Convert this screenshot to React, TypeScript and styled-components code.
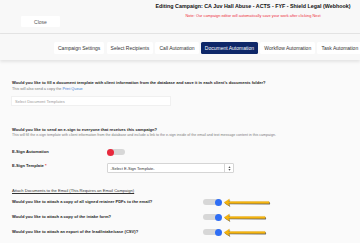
import React from 'react';
import styled, { createGlobalStyle } from 'styled-components';

const GlobalStyle = createGlobalStyle`
  html, body {
    margin: 0;
    padding: 0;
    background: #fafafa;
  }
  body {
    font-family: "Liberation Sans", Arial, sans-serif;
    color: #222;
  }
`;

const Page = styled.div`
  width: 360px;
  height: 243px;
  overflow: hidden;
  background: #fafafa;
`;

const Header = styled.div`
  display: flex;
  height: 33px;
  background: #f8f8f8;
  border-bottom: 1px solid #e4e4e4;
`;

const CloseCell = styled.div`
  width: 146px;
  padding: 16px 0 0 21px;
  box-sizing: border-box;
`;

const CloseButton = styled.div`
  width: 39px;
  height: 11px;
  background: #fff;
  border-radius: 1px;
  display: flex;
  align-items: center;
  justify-content: center;
  font-size: 5px;
  color: #555;
`;

const TitleBlock = styled.div`
  flex: 1;
  text-align: center;
  padding-top: 3px;
`;

const Title = styled.div`
  font-size: 5.35px;
  line-height: 6px;
  font-weight: bold;
  color: #111;
  white-space: nowrap;
`;

const Note = styled.div`
  margin-top: 4px;
  font-size: 3.9px;
  line-height: 5px;
  color: #ee2f3b;
  white-space: nowrap;
`;

const TabBar = styled.div`
  display: flex;
  gap: 2.3px;
  height: 26px;
  padding: 8px 0 0 54px;
  box-sizing: border-box;
  background: #f8f8f8;
  box-shadow: 0 2px 3px rgba(0, 0, 0, 0.09);
  overflow: hidden;
  position: relative;
`;

const Tab = styled.div<{ $active?: boolean }>`
  flex: none;
  height: 12px;
  padding: 0 4px;
  border-radius: 1.5px;
  display: flex;
  align-items: center;
  white-space: nowrap;
  font-size: 5px;
  background: ${(p) => (p.$active ? '#0e2768' : '#fff')};
  color: ${(p) => (p.$active ? '#fff' : '#333')};
`;

const Content = styled.div`
  padding: 20px 0 0 12px;
`;

const Question = styled.div`
  font-size: 4.1px;
  line-height: 6px;
  font-weight: bold;
  color: #1d1d1d;
  white-space: nowrap;
`;

const Hint = styled.div<{ $small?: boolean }>`
  font-size: ${(p) => (p.$small ? '3.6px' : '3.8px')};
  line-height: ${(p) => (p.$small ? '5px' : '6px')};
  color: #7a7a7a;
  white-space: nowrap;
`;

const LinkText = styled.span`
  color: #3a7bd5;
`;

const TemplateInput = styled.div`
  margin: 4px 0 0 -1px;
  width: 160px;
  height: 10px;
  background: #fff;
  border: 1px solid #f0f0f0;
  box-sizing: border-box;
  display: flex;
  align-items: center;
  padding-left: 3px;
  font-size: 4px;
  color: #9a9a9a;
`;

const Section = styled.div<{ $gap: number }>`
  margin-top: ${(p) => p.$gap}px;
`;

const FieldRow = styled.div<{ $labelWidth: number; $gap: number; $align?: string }>`
  display: flex;
  align-items: ${(p) => p.$align || 'center'};
  margin-top: ${(p) => p.$gap}px;
  & > :first-child {
    width: ${(p) => p.$labelWidth}px;
    flex: none;
  }
`;

const FieldLabel = styled.div`
  font-size: 4.1px;
  line-height: 6px;
  font-weight: bold;
  color: #1d1d1d;
  white-space: nowrap;
`;

const Required = styled.span`
  color: #e53935;
`;

const Toggle = styled.div<{ $on?: boolean; $knob: string }>`
  position: relative;
  width: 18px;
  height: 6px;
  border-radius: 3px;
  background: #d7d7d7;
  flex: none;
  &::after {
    content: '';
    position: absolute;
    top: -0.5px;
    ${(p) => (p.$on ? 'right: -0.5px;' : 'left: -0.5px;')}
    width: 7px;
    height: 7px;
    border-radius: 50%;
    background: ${(p) => p.$knob};
  }
`;

const SelectBox = styled.div`
  display: flex;
  width: 127px;
  height: 10px;
  background: #fff;
  border: 1px solid #d5d5d5;
  border-radius: 1px;
  box-sizing: border-box;
  font-size: 4px;
  color: #333;
`;

const SelectText = styled.div`
  flex: 1;
  display: flex;
  align-items: center;
  padding-left: 2.5px;
`;

const SelectAddon = styled.div`
  width: 8px;
  border-left: 1px solid #d5d5d5;
  display: flex;
  align-items: center;
  justify-content: center;
`;

const SubHeading = styled.div`
  font-size: 4.1px;
  line-height: 6px;
  color: #333;
  text-decoration: underline;
  white-space: nowrap;
`;

const ArrowSvg = styled.svg`
  flex: none;
  margin: -1.5px 0 -1.5px 2px;
  overflow: visible;
`;

const PointerArrow: React.FC<{ length: number }> = ({ length }) => {
  const end = length - 1;
  const d = `M1 4.5 L6.5 1 L5.6 3.6 L${end} 3.4 Q${end + 0.8} 4.5 ${end} 5.6 L5.6 5.4 L6.5 8 Z`;
  return (
    <ArrowSvg width={length} height={9} viewBox={`0 0 ${length} 9`}>
      <path d={d} transform="translate(0.8 0.9)" fill="#3b3b3b" opacity={0.75} />
      <path d={d} fill="#f6b50e" stroke="#d89a00" strokeWidth={0.3} />
    </ArrowSvg>
  );
};

const UpDownIcon: React.FC = () => (
  <svg width="3" height="5" viewBox="0 0 3 5">
    <path d="M1.5 0.3 L2.6 1.9 L0.4 1.9 Z M1.5 4.7 L2.6 3.1 L0.4 3.1 Z" fill="#555" />
  </svg>
);

const App: React.FC = () => {
  return (
    <Page>
      <GlobalStyle />
      <Header>
        <CloseCell>
          <CloseButton>Close</CloseButton>
        </CloseCell>
        <TitleBlock>
          <Title>Editing Campaign: CA Juv Hall Abuse - ACTS - FYF - Shield Legal (Webhook)</Title>
          <Note>Note: Our campaign editor will automatically save your work after clicking Next</Note>
        </TitleBlock>
      </Header>
      <TabBar>
        <Tab>Campaign Settings</Tab>
        <Tab>Select Recipients</Tab>
        <Tab>Call Automation</Tab>
        <Tab $active>Document Automation</Tab>
        <Tab>Workflow Automation</Tab>
        <Tab>Task Automation</Tab>
      </TabBar>
      <Content>
        <Question>
          Would you like to fill a document template with client information from the database and save it in each client's documents folder?
        </Question>
        <Hint>
          This will also send a copy the <LinkText>Print Queue</LinkText>
        </Hint>
        <TemplateInput>Select Document Templates</TemplateInput>

        <Section $gap={21}>
          <Question>Would you like to send an e-sign to everyone that receives this campaign?</Question>
          <Hint $small>
            This will fill the e-sign template with client information from the database and include a link to the e-sign inside of the email and text message content in this campaign.
          </Hint>
        </Section>

        <FieldRow $labelWidth={95} $gap={11}>
          <FieldLabel>E-Sign Automation</FieldLabel>
          <Toggle $knob="#e8293d" />
        </FieldRow>

        <FieldRow $labelWidth={95} $gap={8} $align="flex-start">
          <FieldLabel>
            E-Sign Template <Required>*</Required>
          </FieldLabel>
          <SelectBox>
            <SelectText>-Select E-Sign Template-</SelectText>
            <SelectAddon>
              <UpDownIcon />
            </SelectAddon>
          </SelectBox>
        </FieldRow>

        <Section $gap={15}>
          <SubHeading>Attach Documents to the Email (This Requires an Email Campaign)</SubHeading>
        </Section>

        <FieldRow $labelWidth={191} $gap={5}>
          <FieldLabel>Would you like to attach a copy of all signed retainer PDFs to the email?</FieldLabel>
          <Toggle $on $knob="#2f6ef5" />
          <PointerArrow length={47} />
        </FieldRow>

        <FieldRow $labelWidth={191} $gap={9}>
          <FieldLabel>Would you like to attach a copy of the intake form?</FieldLabel>
          <Toggle $on $knob="#2f6ef5" />
          <PointerArrow length={43} />
        </FieldRow>

        <FieldRow $labelWidth={191} $gap={9}>
          <FieldLabel>Would you like to attach an export of the lead/intake/case (CSV)?</FieldLabel>
          <Toggle $on $knob="#2f6ef5" />
          <PointerArrow length={43} />
        </FieldRow>
      </Content>
    </Page>
  );
};

export default App;
